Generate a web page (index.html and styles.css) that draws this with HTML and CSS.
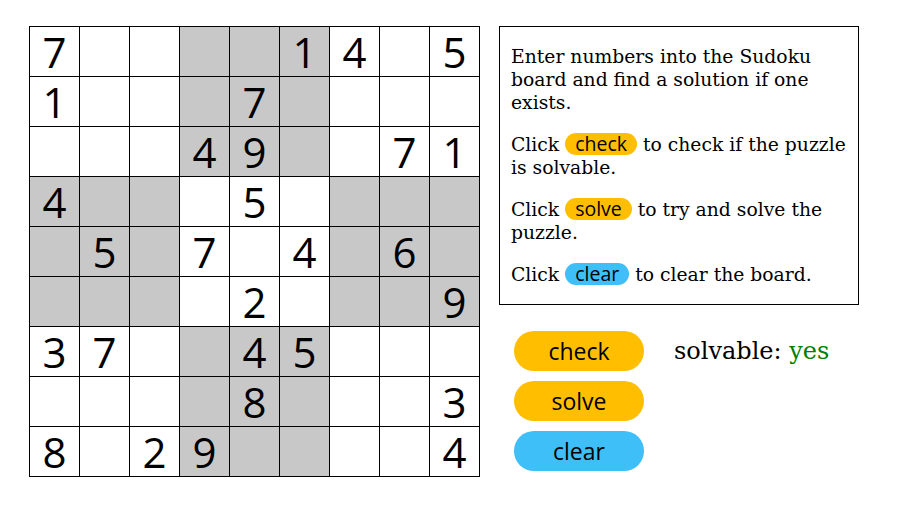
FILE: index.html
```html
<!DOCTYPE html>
<html>
<head>
<meta charset="utf-8">
<link rel="stylesheet" href="styles.css">
</head>
<body>
<div class="page">
  <div class="board">
    <div class="cell">7</div><div class="cell"></div><div class="cell"></div><div class="cell g"></div><div class="cell g"></div><div class="cell g">1</div><div class="cell">4</div><div class="cell"></div><div class="cell">5</div>
    <div class="cell">1</div><div class="cell"></div><div class="cell"></div><div class="cell g"></div><div class="cell g">7</div><div class="cell g"></div><div class="cell"></div><div class="cell"></div><div class="cell"></div>
    <div class="cell"></div><div class="cell"></div><div class="cell"></div><div class="cell g">4</div><div class="cell g">9</div><div class="cell g"></div><div class="cell"></div><div class="cell">7</div><div class="cell">1</div>
    <div class="cell g">4</div><div class="cell g"></div><div class="cell g"></div><div class="cell"></div><div class="cell">5</div><div class="cell"></div><div class="cell g"></div><div class="cell g"></div><div class="cell g"></div>
    <div class="cell g"></div><div class="cell g">5</div><div class="cell g"></div><div class="cell">7</div><div class="cell"></div><div class="cell">4</div><div class="cell g"></div><div class="cell g">6</div><div class="cell g"></div>
    <div class="cell g"></div><div class="cell g"></div><div class="cell g"></div><div class="cell"></div><div class="cell">2</div><div class="cell"></div><div class="cell g"></div><div class="cell g"></div><div class="cell g">9</div>
    <div class="cell">3</div><div class="cell">7</div><div class="cell"></div><div class="cell g"></div><div class="cell g">4</div><div class="cell g">5</div><div class="cell"></div><div class="cell"></div><div class="cell"></div>
    <div class="cell"></div><div class="cell"></div><div class="cell"></div><div class="cell g"></div><div class="cell g">8</div><div class="cell g"></div><div class="cell"></div><div class="cell"></div><div class="cell">3</div>
    <div class="cell">8</div><div class="cell"></div><div class="cell">2</div><div class="cell g">9</div><div class="cell g"></div><div class="cell g"></div><div class="cell"></div><div class="cell"></div><div class="cell">4</div>
  </div>
  <div class="side">
    <div class="info">
      <p>Enter numbers into the Sudoku board and find a solution if one exists.</p>
      <p>Click <span class="pill yellow">check</span> to check if the puzzle is solvable.</p>
      <p>Click <span class="pill yellow">solve</span> to try and solve the puzzle.</p>
      <p>Click <span class="pill blue">clear</span> to clear the board.</p>
    </div>
    <div class="controls">
      <div class="buttons">
        <button class="btn yellow">check</button>
        <button class="btn yellow">solve</button>
        <button class="btn blue">clear</button>
      </div>
      <div class="status">solvable: <span class="yes">yes</span></div>
    </div>
  </div>
</div>
</body>
</html>
```

FILE: styles.css
```css
html, body {
  margin: 0;
  padding: 0;
  background: #fff;
}
.page {
  display: flex;
  align-items: flex-start;
  gap: 19px;
  padding: 26px 0 0 29px;
}
.board {
  display: grid;
  grid-template-columns: repeat(9, 50px);
  grid-auto-rows: 50px;
  border-top: 1px solid #000;
  border-left: 1px solid #000;
}
.cell {
  border-right: 1px solid #000;
  border-bottom: 1px solid #000;
  display: flex;
  align-items: center;
  justify-content: center;
  font-family: "Open Sans", sans-serif;
  font-size: 42px;
  line-height: 50px;
  color: #000;
  background: #fff;
}
.cell.g {
  background: #c8c8c8;
}
.side {
  display: flex;
  flex-direction: column;
}
.info {
  width: 336px;
  height: 277px;
  border: 1px solid #000;
  padding: 0 11px;
  font-family: "DejaVu Serif", serif;
  font-size: 18.75px;
  line-height: 23px;
  color: #000;
  box-sizing: content-box;
}
.info p {
  margin: 19px 0;
}
.info p:first-child {
  margin-top: 18px;
}
.pill {
  display: inline-block;
  font-family: "Open Sans", sans-serif;
  font-size: 19.5px;
  line-height: 22px;
  padding: 0 10px;
  border-radius: 11px;
}
.yellow { background: #ffbf00; }
.blue { background: #3fbff8; }
.controls {
  display: flex;
  align-items: flex-start;
  gap: 30px;
  margin-top: 26px;
  padding-left: 15px;
}
.buttons {
  display: flex;
  flex-direction: column;
  gap: 10px;
}
.btn {
  width: 130px;
  height: 40px;
  border: none;
  border-radius: 20px;
  font-family: "Open Sans", sans-serif;
  font-size: 23px;
  color: #000;
  padding: 0;
}
.status {
  font-family: "DejaVu Serif", serif;
  font-size: 24px;
  line-height: 40px;
  color: #000;
}
.yes {
  color: #008000;
}
```
